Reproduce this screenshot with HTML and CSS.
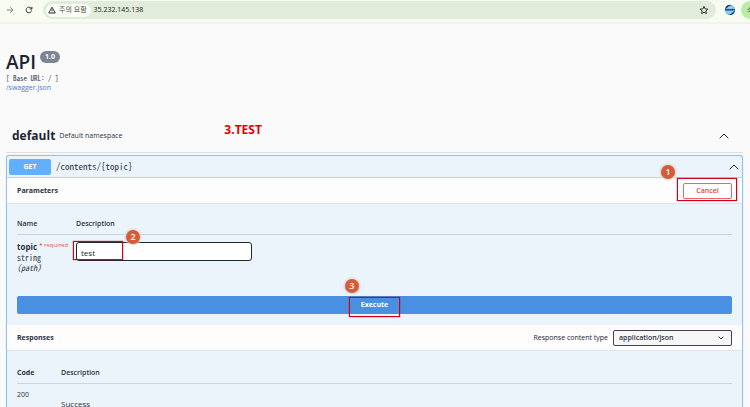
FILE: index.html
```html
<!DOCTYPE html>
<html lang="ko">
<head>
<meta charset="utf-8">
<title>API</title>
<link rel="stylesheet" href="styles.css">
</head>
<body>
<header class="browser">
  <svg class="nav-icon forward" viewBox="0 0 8 8"><path d="M.8 4h6M4.200 1.200 7 4 4.200 6.800"/></svg>
  <svg class="nav-icon reload" viewBox="0 0 8 8"><path d="M6.700 4.500A2.800 2.800 0 1 1 5.900 2L6.800 2.900M6.900.8v2.200H4.700"/></svg>
  <div class="address">
    <span class="chip">
      <svg class="warn" viewBox="0 0 8 8"><path d="M4 1.200 7.300 7H.7Z"/><path d="M4 3.200v1.700M4 5.500v.8"/></svg>
      주의 요함
    </span>
    <span class="url">35.232.145.138</span>
    <svg class="star" viewBox="0 0 10 10"><path d="M5 1.300 6.100 3.900 8.900 4.100 6.800 5.900 7.400 8.600 5 7.200 2.600 8.600 3.200 5.900 1.100 4.100 3.900 3.900Z"/></svg>
  </div>
  <svg class="extension" viewBox="0 0 12 12"><circle cx="6" cy="6" r="5.200" fill="#83c5e8"/><path d="M1 5A5 5 0 0 1 8 1.200C5.500 1.500 4 2.500 3 4Z" fill="#173c80"/><path d="M1 5h10v1.500H1z" fill="#244c91"/><path d="M11 7a5 5 0 0 1-7 3.600c3 0 4-1.200 5-2.600Z" fill="#163a7c"/><path d="M4 3.500h5M3 8.300h4" stroke="#b4dcf0" stroke-width=".6"/></svg>
  <span class="profile">소</span>
</header>

<main>
  <section class="info">
    <h1>API <span class="version">1.0</span></h1>
    <p class="base mono">[ Base URL: / ]</p>
    <a class="spec" href="#spec">/swagger.json</a>
  </section>

  <section class="tag">
    <h2>default</h2>
    <p>Default namespace</p>
    <strong class="step-title">3.TEST</strong>
    <svg class="chevron" viewBox="0 0 10 6"><path d="M.7 5.200 5 1l4.300 4.200"/></svg>
  </section>

  <section class="operation">
    <div class="summary">
      <span class="method">GET</span>
      <span class="path mono">/contents/{topic}</span>
      <svg class="chevron" viewBox="0 0 10 6"><path d="M.7 5.200 5 1l4.300 4.200"/></svg>
    </div>
    <div class="band">
      <h3>Parameters</h3>
      <div class="marked mark-cancel">
        <button class="cancel" type="button">Cancel</button>
        <span class="frame"></span><span class="marker">1</span>
      </div>
    </div>
    <div class="parameters">
      <table>
        <thead><tr><th class="name-col">Name</th><th>Description</th></tr></thead>
        <tbody><tr>
          <td>
            <label class="param" for="topic">topic <span class="required"><b>*</b> required</span></label>
            <div class="type mono">string</div>
            <div class="place mono">(path)</div>
          </td>
          <td>
            <div class="marked mark-input">
              <input id="topic" type="text" value="test">
              <span class="frame"></span><span class="marker">2</span>
            </div>
          </td>
        </tr></tbody>
      </table>
    </div>
    <div class="execute-row">
      <button class="execute" type="button"><span class="marked mark-execute">Execute<span class="frame"></span><span class="marker">3</span></span></button>
    </div>
    <div class="band">
      <h3>Responses</h3>
      <label class="type-label" for="type">Response content type</label>
      <div class="select">
        <select id="type"><option>application/json</option></select>
        <svg viewBox="0 0 6 4"><path d="M.7.700 3 3 5.300.700"/></svg>
      </div>
    </div>
    <div class="responses">
      <table>
        <thead><tr><th class="code-col">Code</th><th>Description</th></tr></thead>
        <tbody><tr><td class="code">200</td><td class="result">Success</td></tr></tbody>
      </table>
    </div>
  </section>
</main>
</body>
</html>
```
FILE: styles.css
```css
* { box-sizing: border-box; }
body {
  margin: 0;
  height: 100vh;
  overflow: hidden;
  background: #fafafa;
  color: #2b3242;
  font: 7px/10px "Open Sans", "Noto Sans CJK KR", sans-serif;
}
h1, h2, h3, p { margin: 0; }
button, input, select { font-family: inherit; }
svg { flex: none; fill: none; stroke: #303438; }
.mono { font-family: "Noto Sans Mono CJK KR", "Liberation Mono", monospace; }

.browser {
  display: flex;
  align-items: center;
  height: 24px;
  padding: 0 0 2px 6px;
  background: #f8fbf2;
  border-bottom: 2px solid #f1f4ec;
  overflow: hidden;
}
.nav-icon { width: 8px; height: 8px; }
.forward { stroke: #85897f; margin-right: 11px; }
.reload { margin-right: 10px; }
.address {
  display: flex;
  flex: 1;
  align-items: center;
  height: 18px;
  padding: 0 7px 0 3px;
  border-radius: 9px;
  background: #e2ecda;
}
.chip {
  display: flex;
  align-items: center;
  gap: 3px;
  height: 13px;
  padding: 0 4px 0 2px;
  border-radius: 7px;
  background: #fbfdf7;
  color: #444941;
}
.warn { width: 8px; height: 8px; }
.url { flex: 1; margin-left: 3px; line-height: 12px; color: #20251e; }
.star { width: 10px; height: 10px; }
.extension { width: 12px; height: 12px; margin: 0 5px 0 8px; stroke: none; }
.profile {
  flex: none;
  width: 9px;
  height: 18px;
  padding-left: 6px;
  border-radius: 9px 0 0 9px;
  background: #b7eea3;
  line-height: 18px;
  overflow: hidden;
}

main { padding: 26px 7px 0 6px; }
.info { height: 75px; }
h1 {
  display: flex;
  align-items: flex-start;
  gap: 4px;
  font-size: 19px;
  font-weight: 600;
  line-height: 24px;
  color: #1c2333;
}
.version {
  margin-top: 1px;
  padding: 0 5px;
  border-radius: 6px;
  background: #7d8492;
  color: #fff;
  font-size: 7px;
  font-weight: 700;
  line-height: 12px;
}
.base { line-height: 8px; }
.spec { display: block; margin-top: 1px; color: #4a80cf; text-decoration: none; }
.tag {
  display: flex;
  align-items: center;
  height: 28px;
  padding: 0 14px 6px 6px;
  border-bottom: 1px solid #dcdee2;
}
.tag h2 { font-size: 12px; font-weight: 700; line-height: 18px; color: #1c2333; }
.tag p { width: 165px; margin-left: 4px; }
.step-title { font-size: 12px; line-height: 14px; color: #e60000; margin-top: -12px; }
.chevron { width: 10px; height: 6px; margin-left: auto; stroke: #20242c; }

.operation {
  margin-top: 2px;
  border: 1px solid #8fc2f5;
  border-radius: 3px;
  background: #ebf3fb;
  box-shadow: 0 0 1px #8fc2f5;
}
.summary {
  display: flex;
  align-items: center;
  height: 22px;
  padding: 0 3px 0 2px;
  border-bottom: 1px solid #b3d5f6;
}
.method {
  width: 42px;
  height: 16px;
  border-radius: 2px;
  background: #61affe;
  color: #fff;
  font-weight: 700;
  line-height: 16px;
  text-align: center;
}
.path { margin-left: 5px; font-size: 9px; }
.band {
  display: flex;
  align-items: center;
  height: 26px;
  padding: 0 10px;
  background: #fdfdfe;
  border-bottom: 1px solid #dbe3ed;
}
h3 { flex: 1; font-size: 7px; font-weight: 700; }
.marked { position: relative; }
.frame { position: absolute; border: 1px solid #d0021b; box-shadow: 0 0 1px #d0021b; pointer-events: none; }
.marker {
  position: absolute;
  width: 14px;
  height: 14px;
  border-radius: 50%;
  background: #d65b39;
  box-shadow: 0 0 2px 1px #d9d4d2;
  color: #fff;
  font-size: 9px;
  font-weight: 600;
  line-height: 14px;
  text-align: center;
}
.cancel {
  display: block;
  width: 49px;
  height: 16px;
  padding: 0;
  border: 1px solid #f06464;
  border-radius: 2px;
  background: #fff;
  color: #e0434b;
  font-size: 7px;
  font-weight: 600;
  line-height: 12px;
}
.mark-cancel .frame { inset: -5px -5px -2px -6px; }
.mark-cancel .marker { left: -22px; top: -18px; }

table { width: 100%; border-collapse: collapse; table-layout: fixed; }
th, td { padding: 0; text-align: left; vertical-align: top; }
th { font-size: 7px; font-weight: 600; border-bottom: 1px solid #ccd4df; }
.parameters { height: 92px; padding: 10px 10px 0; }
.parameters th { height: 20px; padding-top: 5px; }
.parameters td { padding-top: 7px; }
.name-col { width: 59px; }
.param { display: block; font-size: 8px; font-weight: 700; white-space: nowrap; }
.required { color: #ef5350; font-size: 6px; font-weight: 400; vertical-align: top; line-height: 7px; }
.type { margin-top: 1px; font-size: 8px; font-weight: 500; }
.place { font-size: 8px; font-style: italic; }
.mark-input { width: 176px; }
input {
  display: block;
  width: 100%;
  height: 19px;
  padding: 2px 5px 0 4px;
  border: 1px solid #22262d;
  border-radius: 3px;
  background: #fff;
  color: #20242c;
  font-size: 8px;
}
.mark-input .frame { left: -3px; top: -1px; width: 50px; height: 19px; }
.mark-input .marker { left: 50px; top: -12px; }

.execute-row { padding: 0 10px 11px; }
.execute {
  display: block;
  width: 100%;
  height: 18px;
  padding: 0;
  border: 0;
  border-radius: 2px;
  background: #4990e2;
  color: #fff;
  font-size: 7px;
  font-weight: 700;
  line-height: 18px;
}
.mark-execute { display: inline-block; }
.mark-execute .frame { inset: 1px -12px -3px; }
.mark-execute .marker { left: -16px; top: -17px; }
.type-label { margin-right: 5px; font-weight: 400; color: #1c2333; }
.select { position: relative; width: 119px; }
select {
  display: block;
  appearance: none;
  width: 100%;
  height: 16px;
  padding: 0 5px;
  border: 1px solid #41444e;
  border-radius: 2px;
  background: #f7f7f7;
  color: #2b3242;
  font-size: 7px;
  font-weight: 600;
}
.select svg { position: absolute; right: 8px; top: 6px; width: 6px; height: 4px; }
.responses { padding: 14px 10px 0; }
.responses th { height: 18px; padding-top: 3px; }
.responses .code-col { width: 44px; font-weight: 700; }
.code { padding-top: 6px; font-size: 7px; }
.responses .result { padding-top: 15px; font-size: 8px; }
```
